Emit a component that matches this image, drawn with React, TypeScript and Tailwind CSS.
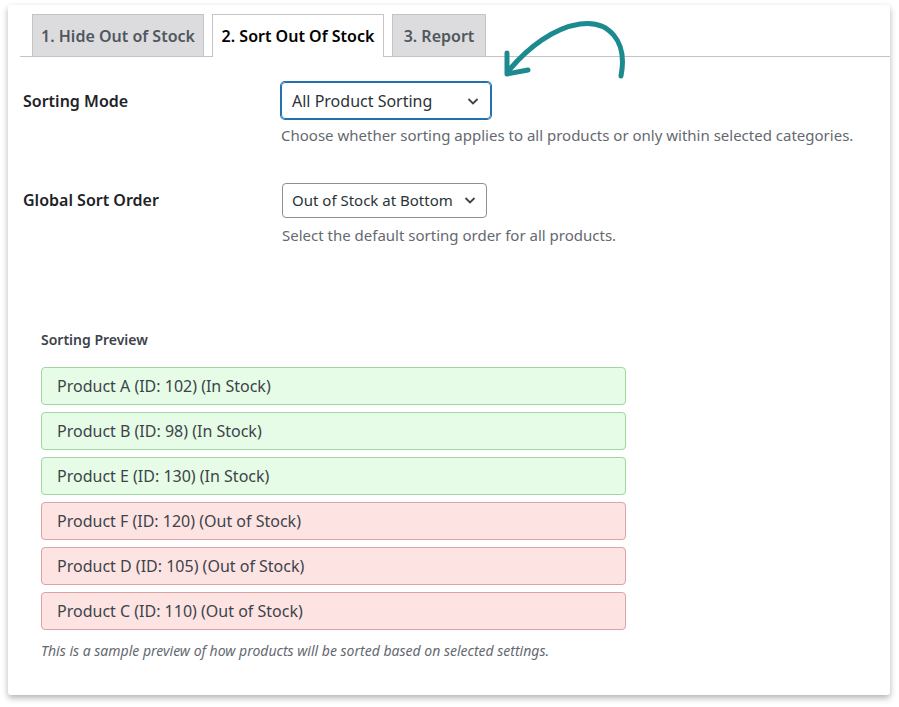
import React from "react";

const rows = [
  { t: "Product A (ID: 102) (In Stock)", ok: true },
  { t: "Product B (ID: 98) (In Stock)", ok: true },
  { t: "Product E (ID: 130) (In Stock)", ok: true },
  { t: "Product F (ID: 120) (Out of Stock)", ok: false },
  { t: "Product D (ID: 105) (Out of Stock)", ok: false },
  { t: "Product C (ID: 110) (Out of Stock)", ok: false },
];

const Chev = () => (
  <svg width="14" height="14" viewBox="0 0 14 14" fill="none" stroke="#3c434a" strokeWidth="1.8">
    <path d="M2.5 5 L7 9.5 L11.5 5" />
  </svg>
);

export default function App() {
  return (
    <div className="w-[899px] h-[707px] bg-white pt-[5px] pl-[8px]" style={{ fontFamily: '"Noto Sans", "Open Sans", sans-serif' }}>
      <div className="relative w-[882px] h-[690px] bg-white rounded-[3px] shadow-[0_3px_6px_rgba(0,0,0,0.3)] pt-[10px]">
        <svg className="absolute left-[480px] top-[8px]" width="150" height="75" viewBox="480 13 150 75" fill="none">
          <path d="M613 76 C 620 40, 600 20, 572 24 C 545 28, 520 48, 502 69" stroke="#1c8a8f" strokeWidth="5" strokeLinecap="round" />
          <path d="M499 53 L499 74 L520 70" stroke="#1c8a8f" strokeWidth="5" strokeLinecap="round" strokeLinejoin="round" />
        </svg>
        <div className="flex items-end ml-[12px] border-b border-[#c3c4c7] h-[42px] gap-[8px] pl-[12px]">
          <div className="h-[42px] w-[172px] flex items-center justify-center bg-[#dcdcde] border border-[#c3c4c7] border-b-0 text-[16px] font-semibold text-[#50575e]">1. Hide Out of Stock</div>
          <div className="h-[43px] -mb-px w-[172px] flex items-center justify-center bg-white border border-[#c3c4c7] border-b-0 text-[16px] font-semibold text-black">2. Sort Out Of Stock</div>
          <div className="h-[42px] w-[94px] flex items-center justify-center bg-[#dcdcde] border border-[#c3c4c7] border-b-0 text-[16px] font-semibold text-[#50575e]">3. Report</div>
        </div>
        <div className="flex pl-[15px] pt-[25px]">
          <div className="w-[258px] pt-[7px] text-[16px] font-semibold text-[#1d2327]">Sorting Mode</div>
          <div>
            <div className="w-[210px] h-[37px] border border-[#2271b1] rounded-[4px] flex items-center justify-between px-[10px] text-[16px] text-[#2c3338] shadow-[0_0_0_1px_#2271b1] whitespace-nowrap">
              All Product Sorting <Chev />
            </div>
            <div className="mt-[5px] text-[15px] text-[#646970]">Choose whether sorting applies to all products or only within selected categories.</div>
          </div>
        </div>
        <div className="flex pl-[15px] pt-[36px]">
          <div className="w-[259px] pt-[5px] text-[16px] font-semibold text-[#1d2327]">Global Sort Order</div>
          <div>
            <div className="w-[205px] h-[35px] border border-[#8c8f94] rounded-[4px] flex items-center justify-between px-[9px] text-[15px] text-[#2c3338] whitespace-nowrap">
              Out of Stock at Bottom <Chev />
            </div>
            <div className="mt-[6px] text-[15px] text-[#646970]">Select the default sorting order for all products.</div>
          </div>
        </div>
        <div className="pl-[33px] pt-[83px]">
          <div className="text-[14px] font-semibold text-[#3c434a]">Sorting Preview</div>
          <div className="mt-[17px] flex flex-col gap-[7px] w-[585px]">
            {rows.map((r) => (
              <div key={r.t} className={`h-[38px] flex items-center px-[15px] rounded-[4px] border text-[16px] text-[#3c434a] ${r.ok ? "bg-[#e6fce6] border-[#9fd79f]" : "bg-[#fee3e3] border-[#dba4a4]"}`}>
                {r.t}
              </div>
            ))}
          </div>
          <div className="mt-[10px] text-[14px] italic text-[#646970]">This is a sample preview of how products will be sorted based on selected settings.</div>
        </div>
      </div>
    </div>
  );
}
